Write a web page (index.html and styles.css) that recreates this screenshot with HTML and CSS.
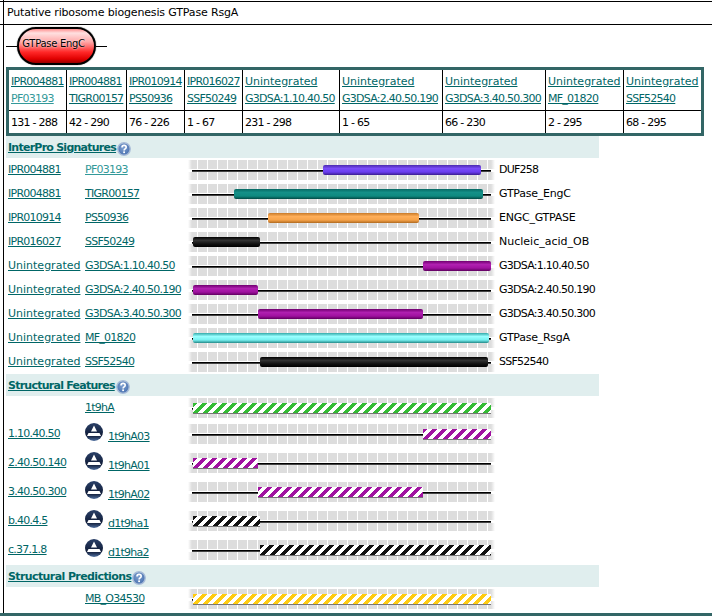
FILE: index.html
```html
<!DOCTYPE html>
<html lang="en">
<head>
  <meta charset="UTF-8">
  <title>Putative ribosome biogenesis GTPase RsgA</title>
  <link rel="stylesheet" href="styles.css">
</head>
<body>
  <svg class="defs" width="0" height="0">
    <defs>
      <radialGradient id="helpFill" cx="45%" cy="40%" r="60%">
        <stop offset="0" stop-color="#7fa0d0"/>
        <stop offset="1" stop-color="#4a72b0"/>
      </radialGradient>
      <linearGradient id="cathFill" x1="0" y1="0" x2="0" y2="1">
        <stop offset="0" stop-color="#2a4068"/>
        <stop offset=".7" stop-color="#101c38"/>
        <stop offset="1" stop-color="#4f6f9f"/>
      </linearGradient>
      <symbol id="help" viewBox="0 0 14 14">
        <circle cx="7" cy="7" r="6.2" fill="url(#helpFill)" stroke="#a8bcd8" stroke-width="1.4"/>
        <path d="M5 5.400c0-1.300 1-2 2.100-2 1.200 0 2.100 .8 2.100 1.900 0 1.700-2.100 1.600-2.100 3.100" fill="none" stroke="#fff" stroke-width="1.600"/>
        <rect x="6.200" y="9.400" width="1.800" height="1.700" fill="#fff"/>
      </symbol>
      <symbol id="cath" viewBox="0 0 18 18">
        <circle cx="9" cy="9" r="9" fill="url(#cathFill)"/>
        <path d="M9 2.500 12 8.500H6z" fill="#fff"/>
        <path d="M3.500 10h11l1.500 3H2z" fill="#fff"/>
      </symbol>
    </defs>
  </svg>

  <div class="frame">
    <div class="title">Putative ribosome biogenesis GTPase RsgA</div>

    <div class="domain-map">
      <span class="stub"></span>
      <div class="pill">GTPase EngC</div>
      <span class="stub"></span>
    </div>

    <table class="matches">
      <colgroup>
        <col class="w57"><col class="w60"><col class="w58"><col class="w58"><col class="w97"><col class="w103"><col class="w103"><col class="w78"><col class="w78">
      </colgroup>
      <tr>
        <td><a href="#">IPR004881</a><br><a class="visited" href="#">PF03193</a></td>
        <td><a href="#">IPR004881</a><br><a href="#">TIGR00157</a></td>
        <td><a href="#">IPR010914</a><br><a href="#">PS50936</a></td>
        <td><a href="#">IPR016027</a><br><a href="#">SSF50249</a></td>
        <td><a class="word" href="#">Unintegrated</a><br><a href="#">G3DSA:1.10.40.50</a></td>
        <td><a class="word" href="#">Unintegrated</a><br><a href="#">G3DSA:2.40.50.190</a></td>
        <td><a class="word" href="#">Unintegrated</a><br><a href="#">G3DSA:3.40.50.300</a></td>
        <td><a class="word" href="#">Unintegrated</a><br><a href="#">MF_01820</a></td>
        <td><a class="word" href="#">Unintegrated</a><br><a href="#">SSF52540</a></td>
      </tr>
      <tr class="ranges">
        <td>131 - 288</td><td>42 - 290</td><td>76 - 226</td><td>1 - 67</td><td>231 - 298</td><td>1 - 65</td><td>66 - 230</td><td>2 - 295</td><td>68 - 295</td>
      </tr>
    </table>

    <div class="section-head"><a href="#">InterPro Signatures</a><svg class="help"><use href="#help"/></svg></div>
    <div class="row">
      <a href="#">IPR004881</a><a class="visited" href="#">PF03193</a>
      <div class="track"><span class="bar purple" style="left:135px;width:158px"></span></div>
      <span>DUF258</span>
    </div>
    <div class="row">
      <a href="#">IPR004881</a><a href="#">TIGR00157</a>
      <div class="track"><span class="bar teal" style="left:46px;width:249px"></span></div>
      <span class="label-word">GTPase_EngC</span>
    </div>
    <div class="row">
      <a href="#">IPR010914</a><a href="#">PS50936</a>
      <div class="track"><span class="bar orange" style="left:80px;width:151px"></span></div>
      <span class="label-word">ENGC_GTPASE</span>
    </div>
    <div class="row">
      <a href="#">IPR016027</a><a href="#">SSF50249</a>
      <div class="track"><span class="bar black" style="left:5px;width:67px"></span></div>
      <span class="word">Nucleic_acid_OB</span>
    </div>
    <div class="row">
      <a class="word" href="#">Unintegrated</a><a href="#">G3DSA:1.10.40.50</a>
      <div class="track"><span class="bar magenta" style="left:235px;width:68px"></span></div>
      <span>G3DSA:1.10.40.50</span>
    </div>
    <div class="row">
      <a class="word" href="#">Unintegrated</a><a href="#">G3DSA:2.40.50.190</a>
      <div class="track"><span class="bar magenta" style="left:5px;width:65px"></span></div>
      <span>G3DSA:2.40.50.190</span>
    </div>
    <div class="row">
      <a class="word" href="#">Unintegrated</a><a href="#">G3DSA:3.40.50.300</a>
      <div class="track"><span class="bar magenta" style="left:70px;width:165px"></span></div>
      <span>G3DSA:3.40.50.300</span>
    </div>
    <div class="row">
      <a class="word" href="#">Unintegrated</a><a href="#">MF_01820</a>
      <div class="track"><span class="bar cyan" style="left:5px;width:296px"></span></div>
      <span class="label-word">GTPase_RsgA</span>
    </div>
    <div class="row">
      <a class="word" href="#">Unintegrated</a><a href="#">SSF52540</a>
      <div class="track"><span class="bar black" style="left:72px;width:228px"></span></div>
      <span>SSF52540</span>
    </div>

    <div class="section-head"><a href="#">Structural Features</a><svg class="help"><use href="#help"/></svg></div>
    <div class="row row-first">
      <span></span><a href="#">1t9hA</a>
      <div class="track"><span class="bar striped green" style="left:5px;width:298px"></span></div>
    </div>
    <div class="row row-tall">
      <a class="cath-name" href="#">1.10.40.50</a>
      <div class="cath-link"><svg class="cath"><use href="#cath"/></svg><a href="#">1t9hA03</a></div>
      <div class="track"><span class="bar striped magenta" style="left:235px;width:68px"></span></div>
    </div>
    <div class="row row-tall">
      <a class="cath-name" href="#">2.40.50.140</a>
      <div class="cath-link"><svg class="cath"><use href="#cath"/></svg><a href="#">1t9hA01</a></div>
      <div class="track"><span class="bar striped magenta" style="left:5px;width:65px"></span></div>
    </div>
    <div class="row row-tall">
      <a class="cath-name" href="#">3.40.50.300</a>
      <div class="cath-link"><svg class="cath"><use href="#cath"/></svg><a href="#">1t9hA02</a></div>
      <div class="track"><span class="bar striped magenta" style="left:70px;width:165px"></span></div>
    </div>
    <div class="row row-tall">
      <a class="cath-name" href="#">b.40.4.5</a>
      <div class="cath-link"><svg class="cath"><use href="#cath"/></svg><a href="#">d1t9ha1</a></div>
      <div class="track"><span class="bar striped black" style="left:5px;width:67px"></span></div>
    </div>
    <div class="row row-last">
      <a class="cath-name" href="#">c.37.1.8</a>
      <div class="cath-link"><svg class="cath"><use href="#cath"/></svg><a href="#">d1t9ha2</a></div>
      <div class="track"><span class="bar striped black" style="left:72px;width:231px"></span></div>
    </div>

    <div class="section-head head-wide"><a href="#">Structural Predictions</a><svg class="help"><use href="#help"/></svg></div>
    <div class="row row-end">
      <span></span><a href="#">MB_O34530</a>
      <div class="track"><span class="bar striped yellow" style="left:5px;width:298px"></span></div>
    </div>
  </div>
  <div class="footer-bar"></div>
</body>
</html>
```

FILE: styles.css
```css
:root {
  --link: #006666;
  --link-visited: #339999;
  --frame-teal: #336666;
  --section-bg: #e0eeee;
}
html, body { height: 100%; }
body {
  margin: 0;
  background: #fff;
  color: #000;
  font-family: "DejaVu Sans", Verdana, sans-serif;
  font-size: 11px;
  overflow: hidden;
}
a { color: var(--link); }
a.visited { color: var(--link-visited); }
.defs { position: absolute; }

.frame {
  height: 612px;
  margin-left: 3px;
  padding: 1px 0 0 2px;
  border-left: 1px solid #000;
}
.title {
  height: 22px;
  line-height: 22px;
  margin-left: -6px;
  padding-left: 7px;
  border-top: 1px solid #000;
  border-bottom: 1px solid #000;
  letter-spacing: -.15px;
}

.domain-map {
  display: flex;
  align-items: center;
  height: 42px;
}
.stub { width: 11px; height: 1px; background: #000; }
.pill {
  box-sizing: border-box;
  width: 79px;
  height: 38px;
  padding: 5px 6px 0 0;
  border: 2px solid #000;
  border-radius: 19px;
  box-shadow: 0 0 1px #000;
  background: linear-gradient(#ff9090 0, #ffe0e0 12%, #ffa8a8 38%, #ff2828 68%, #e00000 88%, #990000 100%);
  font-size: 10px;
  letter-spacing: -.3px;
  line-height: 20px;
  text-align: center;
  text-shadow: 0 0 2px #fff;
  white-space: nowrap;
}

.matches {
  table-layout: fixed;
  width: 698px;
  border: 3px solid var(--frame-teal);
  border-spacing: 0;
  letter-spacing: -.75px;
}
.w57 { width: 57px; }
.w60 { width: 60px; }
.w58 { width: 58px; }
.w97 { width: 97px; }
.w103 { width: 103px; }
.w78 { width: 78px; }
.matches td {
  padding: 0 0 0 2px;
  border-left: 1px solid #000;
  line-height: 17px;
  white-space: nowrap;
  overflow: hidden;
  height: 40px;
}
.matches td:first-child { border-left: 0; }
.matches .ranges td { height: 22px; border-top: 1px solid #000; }

.section-head {
  display: flex;
  align-items: center;
  width: 591px;
  height: 22px;
  padding-left: 2px;
  background: var(--section-bg);
  font-weight: bold;
  letter-spacing: -.75px;
}
.head-wide { letter-spacing: -.6px; }
.help { width: 14px; height: 14px; margin: 3px 0 0 1px; }

.row {
  display: grid;
  grid-template-columns: 77px 103px 307px auto;
  align-items: start;
  height: 24px;
  padding-left: 2px;
  box-sizing: border-box;
  line-height: 24px;
  letter-spacing: -.75px;
}
.row > span:last-child { padding-left: 4px; }
.row .word, .matches .word { letter-spacing: 0; }
.row .label-word { letter-spacing: -.25px; }
.row-first, .row-tall, .row-last, .row-end { padding-top: 2px; line-height: 20px; }
.row-first { height: 26px; }
.row-tall { height: 29px; }
.row-last { height: 27px; }
.row-end { height: 26px; }
.row > .track { margin-top: 2px; }
.row-first > .track, .row-tall > .track, .row-last > .track, .row-end > .track { margin-top: 0; }

.cath-link { display: flex; align-items: flex-end; height: 22px; margin-top: -1px; line-height: 16px; }
.cath { width: 18px; height: 18px; margin: 0 5px 4px 0; flex: none; }

.track {
  position: relative;
  width: 307px;
  height: 20px;
  background:
    linear-gradient(90deg, #fff, rgba(255,255,255,0) 4px, rgba(255,255,255,0) 303px, #fff),
    linear-gradient(#fff, #fff) 0 9px / 100% 3px no-repeat,
    repeating-linear-gradient(90deg, #ddd 0 9px, #fff 9px 10px);
}
.track::before {
  content: "";
  position: absolute;
  left: 4px;
  top: 10px;
  width: 299px;
  height: 1px;
  background: #000;
  box-shadow: 0 1px 0 #444;
}
.bar {
  position: absolute;
  top: 5px;
  height: 10px;
  border-radius: 2px;
}
.purple { background: linear-gradient(#4a2ab0, #7a4cf8 35%, #6a3df0 70%, #3a1c90); }
.teal { background: linear-gradient(#086a64, #159088 35%, #0f8a80 70%, #044a46); }
.orange { background: linear-gradient(#c87a28, #ffae58 35%, #f6a34a 70%, #b06a20); }
.black { background: linear-gradient(#000, #333 35%, #111 70%, #000); }
.magenta { background: linear-gradient(#700070, #b020b0 35%, #a012a0 70%, #600060); }
.cyan { background: linear-gradient(#33aaaa, #99ffff 35%, #77f0f0 70%, #228888); }

.striped { border-radius: 0; box-shadow: 0 1px 0 #777; }
.striped.green { background: repeating-linear-gradient(135deg, #33bb33 0 3.5px, #fff 3.5px 7.07px); }
.striped.magenta { background: repeating-linear-gradient(135deg, #a012a0 0 3.5px, #fff 3.5px 7.07px); }
.striped.black { background: repeating-linear-gradient(135deg, #111 0 3.5px, #fff 3.5px 7.07px); }
.striped.yellow { background: repeating-linear-gradient(135deg, #ffcc11 0 3.5px, #fff 3.5px 7.07px); }

.footer-bar { height: 4px; background: var(--frame-teal); }
```
